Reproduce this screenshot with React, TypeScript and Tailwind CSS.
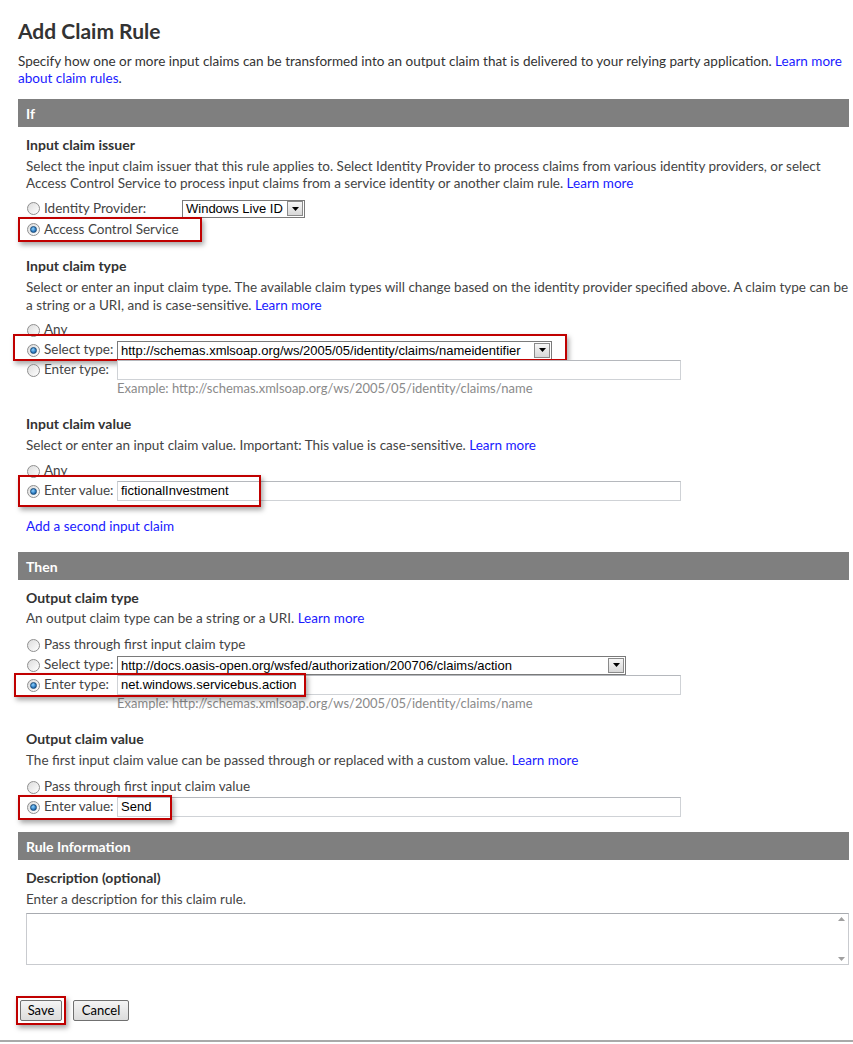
import React from "react";

const Radio = ({ checked = false }: { checked?: boolean }) => (
  <span className="relative inline-flex h-[13px] w-[13px] shrink-0 items-center justify-center rounded-full border border-[#8f8f8f] bg-[linear-gradient(135deg,#dcdcdc,#ffffff)]">
    {checked && (
      <span className="h-[7px] w-[7px] rounded-full border border-[#1b4d7a] bg-[radial-gradient(circle_at_40%_35%,#8fd3ff,#2a79c0_60%,#174a80)]" />
    )}
  </span>
);

const RedBox = ({ className }: { className: string }) => (
  <span
    className={
      "pointer-events-none absolute border-2 border-[#c00000] shadow-[2px_3px_5px_rgba(0,0,0,0.35)] " +
      className
    }
  />
);

const Arrow = () => (
  <span className="flex h-[15px] w-[16px] shrink-0 items-center justify-center border border-[#8a8a8a] bg-[linear-gradient(#f6f6f6,#d8d8d8)]">
    <svg width="7" height="4" viewBox="0 0 7 4">
      <path d="M0 0h7L3.5 4z" fill="#000" />
    </svg>
  </span>
);

const Select = ({ text, className }: { text: string; className: string }) => (
  <span
    className={
      "flex items-center justify-between border border-[#7a7a7a] bg-white pl-[3px] pr-[1px] font-['Liberation_Sans',Arial,sans-serif] text-[13px] text-black " +
      className
    }
  >
    <span className="whitespace-nowrap leading-none">{text}</span>
    <Arrow />
  </span>
);

const Input = ({ text = "" }: { text?: string }) => (
  <span className="flex h-[20px] w-[564px] items-center border border-[#cfd2d6] border-t-[#b5b8bd] bg-white pl-[3px] font-['Liberation_Sans',Arial,sans-serif] text-[13px] text-black">
    {text}
  </span>
);

const Link = ({ children }: { children: React.ReactNode }) => (
  <span className="text-[#1a1aff]">{children}</span>
);

const Bar = ({ title }: { title: string }) => (
  <div className="flex h-[28px] items-center bg-[#7f7f7f] pl-[8px] text-[14px] font-bold text-white">
    {title}
  </div>
);

const Heading = ({ children, mt }: { children: React.ReactNode; mt: string }) => (
  <div className={"h-[17px] text-[14px] font-bold leading-[17px] text-[#333] " + mt}>{children}</div>
);

const Row = ({
  checked,
  label,
  children,
  box,
}: {
  checked?: boolean;
  label: string;
  children?: React.ReactNode;
  box?: string;
}) => (
  <div className="relative flex h-[20px] items-center">
    <span className="flex w-[91px] shrink-0 items-center gap-[4px] pl-[1px]">
      <Radio checked={checked} />
      <span className="whitespace-nowrap leading-none">{label}</span>
    </span>
    {children}
    {box && <RedBox className={box} />}
  </div>
);

export default function App() {
  return (
    <div className="h-[1044px] w-[853px] overflow-hidden bg-white font-['Lato','Noto_Sans',sans-serif] text-[13.5px] text-[#444]">
      <div className="ml-[18px] w-[831px]">
        <h1 className="pt-[18px] text-[21px] font-bold leading-[26px] text-[#333]">Add Claim Rule</h1>
        <p className="mt-[9px] leading-[17px] text-[#333]">
          Specify how one or more input claims can be transformed into an output claim that is delivered to your relying party application.{" "}
          <Link>Learn more</Link>
          <br />
          <Link>about claim rules</Link>.
        </p>

        <div className="mt-[12px]">
          <Bar title="If" />
          <div className="pl-[8px]">
            <Heading mt="mt-[9px]">Input claim issuer</Heading>
            <p className="mt-[5px] whitespace-nowrap leading-[17px]">
              Select the input claim issuer that this rule applies to. Select Identity Provider to process claims from various identity providers, or select
              <br />
              Access Control Service to process input claims from a service identity or another claim rule. <Link>Learn more</Link>
            </p>
            <div className="mt-[6px]">
              <div className="relative flex h-[21px] items-center">
                <span className="flex w-[156px] shrink-0 items-center gap-[4px] pl-[1px]">
                  <Radio />
                  <span className="leading-none">Identity Provider:</span>
                </span>
                <Select text="Windows Live ID" className="h-[18px] w-[123px]" />
              </div>
              <div className="relative flex h-[21px] items-center">
                <span className="flex items-center gap-[4px] pl-[1px]">
                  <Radio checked />
                  <span className="leading-none">Access Control Service</span>
                </span>
                <RedBox className="left-[-8px] top-[-2px] h-[25px] w-[184px]" />
              </div>
            </div>

            <Heading mt="mt-[17px]">Input claim type</Heading>
            <p className="mt-[4px] whitespace-nowrap leading-[18px]">
              Select or enter an input claim type. The available claim types will change based on the identity provider specified above. A claim type can be
              <br />
              a string or a URI, and is case-sensitive. <Link>Learn more</Link>
            </p>
            <div className="mt-[6px]">
              <Row label="Any" />
              <Row checked label="Select type:" box="left-[-13px] top-[-6px] h-[27px] w-[554px]">
                <Select text="http://schemas.xmlsoap.org/ws/2005/05/identity/claims/nameidentifier" className="h-[19px] w-[435px]" />
              </Row>
              <Row label="Enter type:">
                <Input />
              </Row>
              <div className="ml-[91px] h-[17px] text-[13px] leading-[17px] text-[#8a8a8a]">
                Example: http://schemas.xmlsoap.org/ws/2005/05/identity/claims/name
              </div>
            </div>

            <Heading mt="mt-[18px]">Input claim value</Heading>
            <p className="mt-[5px] leading-[17px]">
              Select or enter an input claim value. Important: This value is case-sensitive. <Link>Learn more</Link>
            </p>
            <div className="mt-[7px]">
              <Row label="Any" />
              <Row checked label="Enter value:" box="left-[-8px] top-[-6px] h-[32px] w-[243px]">
                <Input text="fictionalInvestment" />
              </Row>
            </div>
            <div className="mt-[17px] h-[17px] leading-[17px]">
              <Link>Add a second input claim</Link>
            </div>
          </div>
        </div>

        <div className="mt-[17px]">
          <Bar title="Then" />
          <div className="pl-[8px]">
            <Heading mt="mt-[9px]">Output claim type</Heading>
            <p className="mt-[4px] leading-[17px]">
              An output claim type can be a string or a URI. <Link>Learn more</Link>
            </p>
            <div className="mt-[8px]">
              <Row label="Pass through first input claim type" />
              <Row label="Select type:">
                <Select text="http://docs.oasis-open.org/wsfed/authorization/200706/claims/action" className="h-[19px] w-[509px]" />
              </Row>
              <Row checked label="Enter type:" box="left-[-12px] top-[-2px] h-[24px] w-[292px]">
                <Input text="net.windows.servicebus.action" />
              </Row>
              <div className="ml-[91px] h-[17px] text-[13px] leading-[17px] text-[#8a8a8a]">
                Example: http://schemas.xmlsoap.org/ws/2005/05/identity/claims/name
              </div>
            </div>

            <Heading mt="mt-[18px]">Output claim value</Heading>
            <p className="mt-[5px] leading-[17px]">
              The first input claim value can be passed through or replaced with a custom value. <Link>Learn more</Link>
            </p>
            <div className="mt-[8px]">
              <Row label="Pass through first input claim value" />
              <Row checked label="Enter value:" box="left-[-8px] top-[-2px] h-[25px] w-[154px]">
                <Input text="Send" />
              </Row>
            </div>
          </div>
        </div>

        <div className="mt-[15px]">
          <Bar title="Rule Information" />
          <div className="pl-[8px]">
            <Heading mt="mt-[9px]">Description (optional)</Heading>
            <p className="mt-[5px] leading-[17px]">Enter a description for this claim rule.</p>
            <div className="mt-[5px] flex h-[52px] w-[823px] justify-end border border-[#c9cbcf] border-t-[#a8abb0] bg-white">
              <div className="flex w-[14px] flex-col items-center justify-between py-[3px]">
                <svg width="7" height="4" viewBox="0 0 7 4"><path d="M3.5 0L7 4H0z" fill="#a0a0a0" /></svg>
                <svg width="7" height="4" viewBox="0 0 7 4"><path d="M0 0h7L3.5 4z" fill="#a0a0a0" /></svg>
              </div>
            </div>
          </div>
        </div>
      </div>

      <div className="ml-[20px] mt-[35px] flex gap-[11px]">
        <div className="relative">
          <button className="h-[21px] w-[42px] rounded-[2px] border border-[#707070] bg-[linear-gradient(#f4f4f4,#dcdcdc)] text-[13px] leading-none text-black">
            Save
          </button>
          <RedBox className="left-[-4px] top-[-4px] h-[29px] w-[50px]" />
        </div>
        <button className="h-[21px] w-[56px] rounded-[2px] border border-[#707070] bg-[linear-gradient(#f4f4f4,#dcdcdc)] text-[13px] leading-none text-black">
          Cancel
        </button>
      </div>
      <div className="mt-[19px] h-[2px] w-full bg-[#a9a9a9]" />
    </div>
  );
}
